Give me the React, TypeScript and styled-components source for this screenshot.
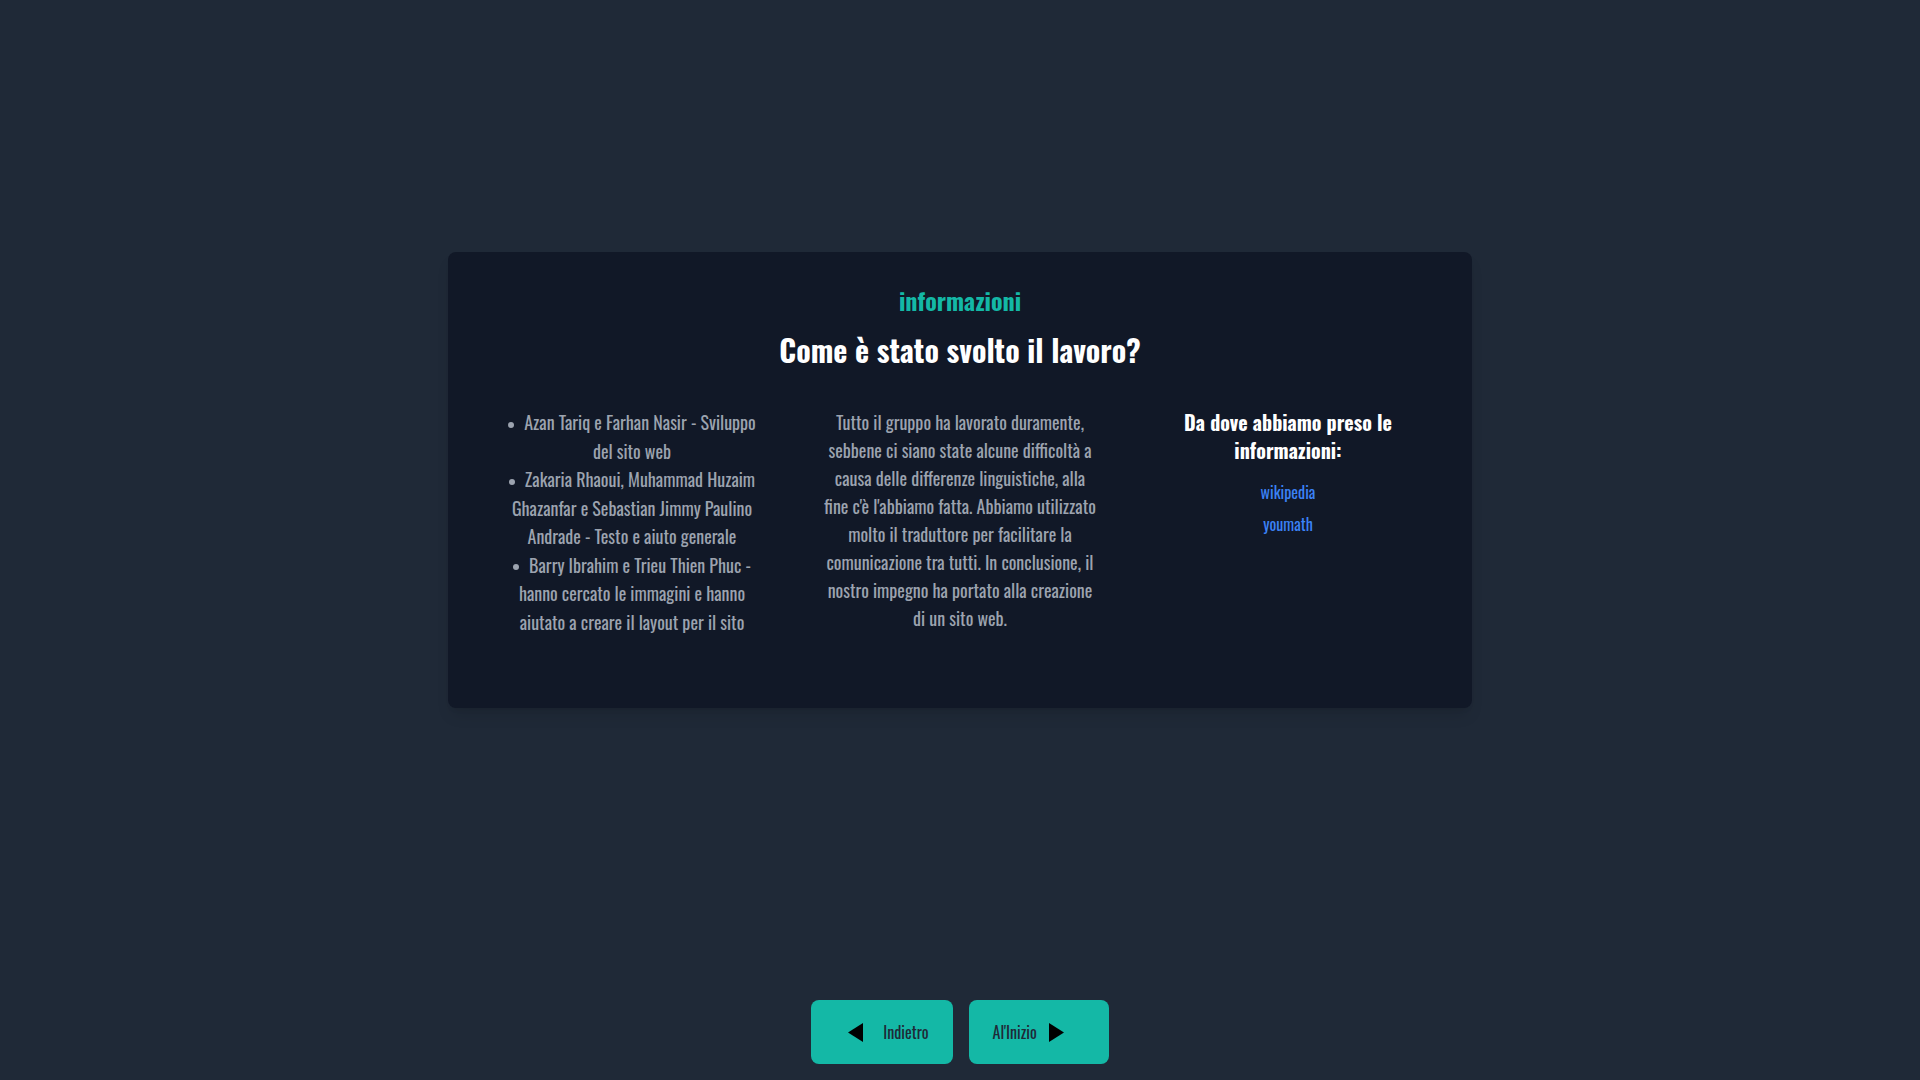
import React from "react";
import styled, { createGlobalStyle } from "styled-components";

const GlobalStyle = createGlobalStyle`
  * { box-sizing: border-box; }
  html, body { margin: 0; padding: 0; }
  body {
    background: #1f2937;
    font-family: "Oswald", "Open Sans", sans-serif;
    font-stretch: condensed;
  }
`;

const Page = styled.div`
  min-height: 100vh;
  display: flex;
  flex-direction: column;
`;

const Main = styled.main`
  flex: 1;
  display: flex;
  align-items: center;
  justify-content: center;
`;

const Card = styled.section`
  width: 1024px;
  background: #111827;
  border-radius: 8px;
  padding: 32px;
  box-shadow: 0 10px 15px -3px rgba(0, 0, 0, 0.1), 0 4px 6px -4px rgba(0, 0, 0, 0.1);
  text-align: center;
`;

const Eyebrow = styled.h3`
  margin: 0 0 16px;
  font-size: 24px;
  line-height: 32px;
  font-weight: 700;
  color: #14b8a6;
`;

const Title = styled.h2`
  margin: 0 0 24px;
  font-size: 30px;
  line-height: 36px;
  font-weight: 700;
  color: #ffffff;
`;

const Grid = styled.div`
  display: grid;
  grid-template-columns: repeat(3, 1fr);
  gap: 24px;
  margin-bottom: 24px;
`;

const Column = styled.div`
  padding: 16px;
`;

const List = styled.ul`
  margin: 0;
  padding: 0 2px;
  list-style: none;
  color: #9ca3af;
  font-size: 18px;
  line-height: 28.5px;
  font-weight: 400;
`;

const Item = styled.li`
  margin: 0;

  &::before {
    content: "";
    display: inline-block;
    width: 6px;
    height: 6px;
    border-radius: 50%;
    background: currentColor;
    vertical-align: middle;
    margin-right: 10px;
  }
`;

const Paragraph = styled.p`
  margin: 0;
  color: #9ca3af;
  font-size: 18px;
  line-height: 28px;
  font-weight: 400;
`;

const SourceTitle = styled.h4`
  margin: 0 0 16px;
  color: #ffffff;
  font-size: 20px;
  line-height: 28px;
  font-weight: 700;
`;

const Links = styled.div`
  display: flex;
  flex-direction: column;
  align-items: center;
  gap: 8px;
`;

const SourceLink = styled.a`
  color: #3b82f6;
  font-size: 16px;
  line-height: 24px;
  text-decoration: none;
`;

const Footer = styled.footer`
  display: flex;
  justify-content: center;
  gap: 16px;
  padding: 40px 0 16px;
`;

const NavButton = styled.button`
  height: 64px;
  display: inline-flex;
  align-items: center;
  gap: 12px;
  padding: 0 24px;
  border: none;
  border-radius: 8px;
  background: #14b8a6;
  color: #1f2937;
  font-family: inherit;
  font-size: 16px;
  line-height: 24px;
  font-weight: 400;
  cursor: pointer;
`;

const Caret = styled.svg`
  display: block;
  flex: none;
`;

export default function App() {
  return (
    <Page>
      <GlobalStyle />
      <Main>
        <Card>
          <Eyebrow>informazioni</Eyebrow>
          <Title>Come è stato svolto il lavoro?</Title>
          <Grid>
            <Column>
              <List>
                <Item>Azan Tariq e Farhan Nasir - Sviluppo del sito web</Item>
                <Item>
                  Zakaria Rhaoui, Muhammad Huzaim Ghazanfar e Sebastian Jimmy
                  Paulino Andrade - Testo e aiuto generale
                </Item>
                <Item>
                  Barry Ibrahim e Trieu Thien Phuc - hanno cercato le immagini e
                  hanno aiutato a creare il layout per il sito
                </Item>
              </List>
            </Column>
            <Column>
              <Paragraph>
                Tutto il gruppo ha lavorato duramente, sebbene ci siano state
                alcune difficoltà a causa delle differenze linguistiche, alla fine
                c'è l'abbiamo fatta. Abbiamo utilizzato molto il traduttore per
                facilitare la comunicazione tra tutti. In conclusione, il nostro
                impegno ha portato alla creazione di un sito web.
              </Paragraph>
            </Column>
            <Column>
              <SourceTitle>Da dove abbiamo preso le informazioni:</SourceTitle>
              <Links>
                <SourceLink href="#">wikipedia</SourceLink>
                <SourceLink href="#">youmath</SourceLink>
              </Links>
            </Column>
          </Grid>
        </Card>
      </Main>
      <Footer>
        <NavButton>
          <Caret width="36" height="24" viewBox="0 0 36 24">
            <path d="M28 3 L13 12.5 L28 22 Z" fill="#000" />
          </Caret>
          Indietro
        </NavButton>
        <NavButton>
          Al'Inizio
          <Caret width="36" height="24" viewBox="0 0 36 24">
            <path d="M0 3 L15 12.5 L0 22 Z" fill="#000" />
          </Caret>
        </NavButton>
      </Footer>
    </Page>
  );
}
